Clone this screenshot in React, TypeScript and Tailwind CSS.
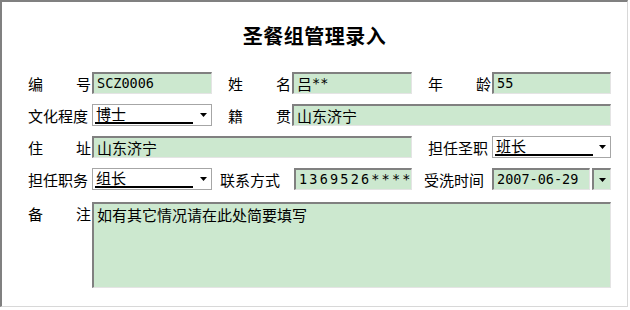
import type { ReactNode } from 'react';

const fieldCls =
  'h-[22px] flex items-center pl-[3px] bg-[#cce8cf] border-t-2 border-l-2 border-r border-b border-t-[#808080] border-l-[#808080] border-r-[#e4e4e4] border-b-[#e4e4e4] text-[15px] leading-none text-black overflow-hidden whitespace-nowrap';

const mono = "font-['DejaVu_Sans_Mono',monospace] text-[13.5px]";

function Label({ text, className = '' }: { text: string; className?: string }) {
  const chars = text.split('');
  return (
    <div className={`h-[22px] flex items-center justify-between pr-[1px] text-[15px] leading-none ${className}`}>
      {chars.map((c, i) => (
        <span key={i}>{c}</span>
      ))}
    </div>
  );
}

function Field({ children, className = '' }: { children?: ReactNode; className?: string }) {
  return <div className={`${fieldCls} ${className}`}>{children}</div>;
}

function Arrow() {
  return (
    <svg width="7" height="4" viewBox="0 0 7 4" className="shrink-0">
      <path d="M0 0h7L3.5 4z" fill="#000" />
    </svg>
  );
}

function Select({ value, className = '' }: { value: string; className?: string }) {
  return (
    <div className={`h-[22px] flex items-center justify-between bg-white border border-[#a6a6a6] pl-[2px] pr-[4px] text-[15px] leading-none ${className}`}>
      <div className="w-[98px] border-b-2 border-black pb-[1px] pl-[1px]">{value}</div>
      <Arrow />
    </div>
  );
}

export default function App() {
  return (
    <div className="w-[630px] h-[310px] bg-white font-['Noto_Sans_CJK_SC','Noto_Sans_CJK_JP',sans-serif] text-black">
      <div className="w-[628px] h-[307px] border-t-2 border-l-2 border-r border-b border-t-[#808080] border-l-[#808080] border-r-[#d8d8d8] border-b-[#d8d8d8]">
        <h1 className="mt-[22px] text-center text-[20px] leading-[24px] font-bold tracking-[0.5px]">
          圣餐组管理录入
        </h1>

        <div className="mt-[24px] ml-[26px] grid grid-cols-[64px_120px_80px_120px_80px_119px] gap-y-[10px] items-center">
          {/* 第一行 */}
          <Label text="编号" />
          <Field>
            <span className={mono}>SCZ0006</span>
          </Field>
          <Label text="姓名" className="pl-[16px]" />
          <Field>
            吕<span className={mono}>**</span>
          </Field>
          <Label text="年龄" className="pl-[16px]" />
          <Field>
            <span className={mono}>55</span>
          </Field>

          {/* 第二行 */}
          <Label text="文化程度" className="!justify-start" />
          <Select value="博士" />
          <Label text="籍贯" className="pl-[16px]" />
          <Field className="col-span-3">山东济宁</Field>

          {/* 第三行 */}
          <Label text="住址" />
          <Field className="col-span-3">山东济宁</Field>
          <Label text="担任圣职" className="pl-[16px] !justify-start" />
          <Select value="班长" />

          {/* 第四行 */}
          <Label text="担任职务" className="!justify-start" />
          <Select value="组长" />
          <Label text="联系方式" className="pl-[8px] !justify-start" />
          <Field className="ml-[2px]">
            <span className={`${mono} tracking-[2.2px]`}>1369526****</span>
          </Field>
          <Label text="受洗时间" className="pl-[12px] !justify-start" />
          <div className="flex gap-[2px]">
            <Field className="flex-1">
              <span className={mono}>2007-06-29</span>
            </Field>
            <Field className="w-[19px] !pl-0 justify-center">
              <Arrow />
            </Field>
          </div>

          {/* 备注 */}
          <Label text="备注" className="self-start mt-[2px]" />
          <Field className="col-span-5 !h-[86px] !items-start pt-[3px] mt-[2px]">
            如有其它情况请在此处简要填写
          </Field>
        </div>
      </div>
    </div>
  );
}
